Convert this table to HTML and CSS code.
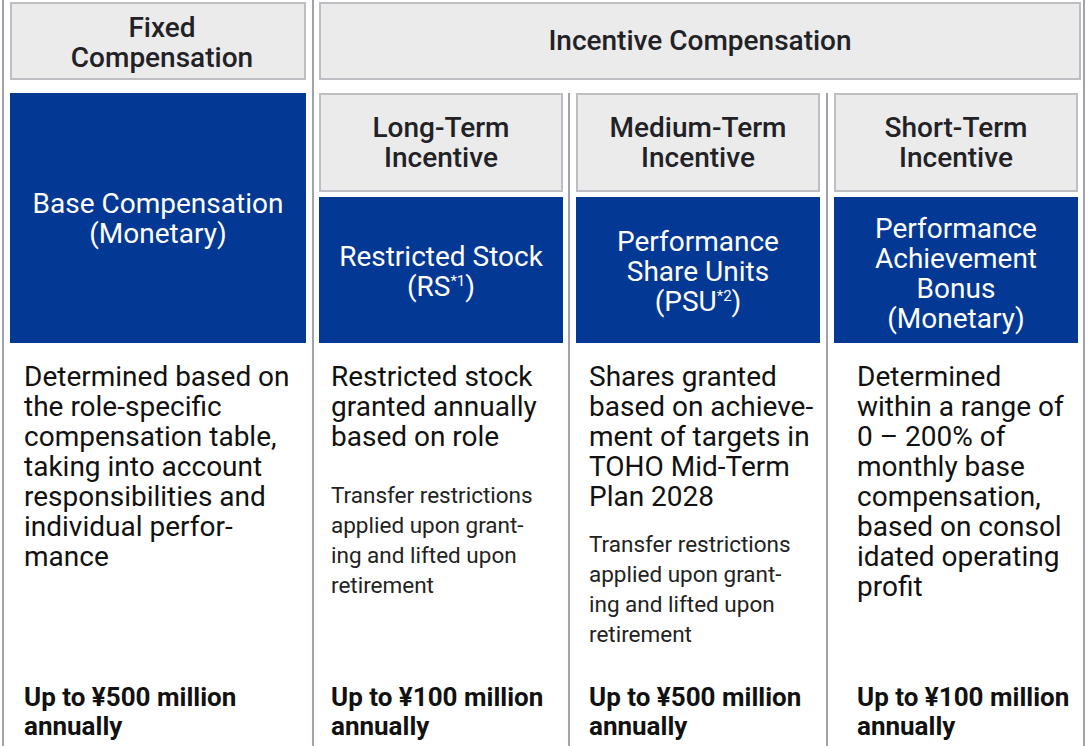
FILE: index.html
```html
<!DOCTYPE html>
<html lang="en">
<head>
<meta charset="utf-8">
<title>Compensation Structure</title>
<link rel="stylesheet" href="styles.css">
</head>
<body>
<div class="chart">
  <section class="col col-fixed">
    <div class="head head-top head-fixed"><span>Fixed<br>Compensation</span></div>
    <div class="blue blue-tall"><span>Base Compensation<br>(Monetary)</span></div>
    <div class="body body-fixed">
      <p class="main">Determined based on<br>the role-specific<br>compensation table,<br>taking into account<br>responsibilities and<br>individual perfor-<br>mance</p>
      <p class="amount">Up to ¥500 million<br>annually</p>
    </div>
  </section>
  <section class="col col-incentive">
    <div class="head head-top"><span>Incentive Compensation</span></div>
    <div class="subs">
      <div class="sub sub-long">
        <div class="head head-sub"><span>Long-Term<br>Incentive</span></div>
        <div class="blue blue-sub"><span>Restricted Stock<br>(RS<sup>*1</sup>)</span></div>
        <div class="body body-long">
          <p class="main">Restricted stock<br>granted annually<br>based on role</p>
          <p class="note note-wide">Transfer restrictions<br>applied upon grant-<br>ing and lifted upon<br>retirement</p>
          <p class="amount">Up to ¥100 million<br>annually</p>
        </div>
      </div>
      <div class="sub sub-mid">
        <div class="head head-sub"><span>Medium-Term<br>Incentive</span></div>
        <div class="blue blue-sub"><span>Performance<br>Share Units<br>(PSU<sup>*2</sup>)</span></div>
        <div class="body body-mid">
          <p class="main">Shares granted<br>based on achieve-<br>ment of targets in<br>TOHO Mid-Term<br>Plan 2028</p>
          <p class="note">Transfer restrictions<br>applied upon grant-<br>ing and lifted upon<br>retirement</p>
          <p class="amount">Up to ¥500 million<br>annually</p>
        </div>
      </div>
      <div class="sub sub-short">
        <div class="head head-sub"><span>Short-Term<br>Incentive</span></div>
        <div class="blue blue-sub blue-short"><span>Performance<br>Achievement<br>Bonus<br>(Monetary)</span></div>
        <div class="body body-short">
          <p class="main">Determined<br>within a range of<br>0 – 200% of<br>monthly base<br>compensation,<br>based on consol<br>idated operating<br>profit</p>
          <p class="amount">Up to ¥100 million<br>annually</p>
        </div>
      </div>
    </div>
  </section>
</div>
</body>
</html>
```

FILE: styles.css
```css
* {
  box-sizing: border-box;
}

html, body {
  margin: 0;
  padding: 0;
  background: #ffffff;
}

body {
  font-family: Roboto, "Liberation Sans", Arial, sans-serif;
  color: #111111;
  width: 1088px;
  height: 746px;
  overflow: hidden;
}

.chart {
  display: flex;
  margin-left: 2px;
  height: 746px;
}

.col {
  display: flex;
  flex-direction: column;
  border-right: 2px solid #a2a2ac;
  padding-top: 2px;
}

.col-fixed {
  width: 312px;
  border-left: 2px solid #a2a2ac;
  padding-left: 6px;
  padding-right: 6px;
}

.col-incentive {
  width: 771px;
  padding-left: 5px;
  padding-right: 2px;
}

.head {
  display: flex;
  align-items: center;
  justify-content: center;
  text-align: center;
  background: #ebebeb;
  border: 2px solid #bdbdc2;
  color: #222226;
  font-size: 28px;
  font-weight: 500;
  line-height: 30px;
}

.head-top {
  height: 78px;
}

.head-fixed {
  padding-left: 8px;
  padding-top: 4px;
}

.head-sub {
  height: 99px;
}

.blue {
  display: flex;
  align-items: center;
  justify-content: center;
  text-align: center;
  background: #033895;
  color: #ffffff;
  font-size: 28px;
  font-weight: 400;
  line-height: 30px;
}

.blue sup {
  font-size: 15px;
  line-height: 0;
  vertical-align: 10px;
}

.blue-tall {
  margin-top: 13px;
  height: 250px;
  padding-top: 1px;
}

.blue-sub {
  margin-top: 5px;
  height: 146px;
  padding-top: 3px;
}

.blue-short {
  padding-top: 7px;
}

.subs {
  display: flex;
  margin-top: 13px;
  flex: 1;
}

.sub {
  display: flex;
  flex-direction: column;
}

.sub-long {
  width: 251px;
  padding-right: 5px;
  border-right: 2px solid #a2a2ac;
}

.sub-mid {
  width: 258px;
  padding: 0 6px;
  border-right: 2px solid #a2a2ac;
}

.sub-short {
  width: 253px;
  padding-left: 6px;
  padding-right: 3px;
}

.body {
  flex: 1;
  display: flex;
  flex-direction: column;
  padding-top: 19px;
  padding-bottom: 5px;
}

.body-fixed {
  padding-left: 14px;
}

.body-long {
  padding-left: 12px;
}

.body-mid {
  padding-left: 13px;
}

.body-short {
  padding-left: 23px;
}

.body p {
  margin: 0;
}

.main {
  font-size: 28px;
  line-height: 30px;
  color: #111111;
  white-space: nowrap;
}

.note {
  margin-top: 17px !important;
  font-size: 22.5px;
  line-height: 30px;
  color: #222222;
  white-space: nowrap;
}

.note-wide {
  margin-top: 28px !important;
}

.amount {
  margin-top: auto !important;
  font-size: 26px;
  font-weight: 700;
  line-height: 29px;
  color: #111111;
  white-space: nowrap;
}
```
